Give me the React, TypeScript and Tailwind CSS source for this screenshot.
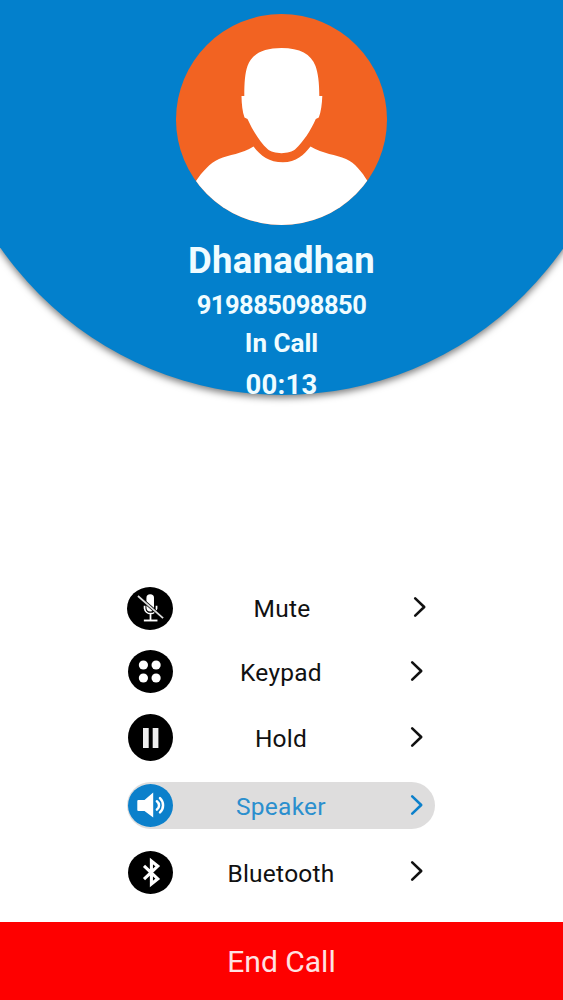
import React from 'react';
import clsx from 'clsx';

interface CallAction {
  label: string;
  icon: React.ReactNode;
  rowClass: string;
  labelClass: string;
  chevronClass: string;
  active?: boolean;
}

const Avatar: React.FC = () => (
  <svg className="h-[211px] w-[211px] shrink-0" viewBox="0 0 211 211">
    <defs>
      <clipPath id="avatar-clip">
        <circle cx="105.5" cy="105.5" r="105.5" />
      </clipPath>
    </defs>
    <g clipPath="url(#avatar-clip)">
      <rect width="211" height="211" fill="#f26322" />
      <path
        fill="#fff"
        d="M105.5 34C87 34 76 40 71.5 52C69 59 68.3 68 68.3 82H65.5C65.6 90 66.5 98 68.5 103.5L71.5 105C77 117 84 128 91.5 135C97 140.5 114 140.5 119.5 135C127 128 134.5 117 139.8 105L142.8 103.5C145 98 146 90 146.3 82H143.3C143.3 68 142 59 139.5 52C135 40 124 34 105.5 34Z"
      />
      <path
        fill="#fff"
        d="M77.5 132.5C84 141 93 148.3 107 148.3C120 148.3 128 141 134.5 132.5C147 140 160 140.5 170 145C179 149 186 158 191.5 167V211H20V167C26 158 34 149 43 145C53 140.5 66 140 77.5 132.5Z"
      />
    </g>
  </svg>
);

const MuteIcon: React.FC = () => (
  <svg className="h-[43px] w-[46px]" viewBox="0 0 45 43" preserveAspectRatio="none" fill="none">
    <ellipse cx="22.5" cy="21.5" rx="22.5" ry="21.5" fill="#000" />
    <rect x="19" y="7.3" width="7.4" height="17.2" rx="3.7" fill="#fff" />
    <path d="M17.2 18.8v2.7a5.9 6 0 0 0 11.7 0v-2.7M23 27.5V33" stroke="#fff" strokeWidth="1.7" />
    <path d="M16.5 33.5h13.3" stroke="#fff" strokeWidth="1.9" />
    <path d="M11 9.3l24.5 22" stroke="#000" strokeWidth="3.2" />
    <path d="M10.7 9l24.6 22.2" stroke="#ddd" strokeWidth="1.7" />
  </svg>
);

const KeypadIcon: React.FC = () => (
  <svg className="h-[43px] w-[45px]" viewBox="0 0 45 43">
    <ellipse cx="22.5" cy="21.5" rx="22.5" ry="21.5" fill="#000" />
    <g fill="#fff">
      <circle cx="15.4" cy="15" r="4.6" />
      <circle cx="28.1" cy="15" r="4.6" />
      <circle cx="15.4" cy="28" r="4.6" />
      <circle cx="28.1" cy="28" r="4.6" />
    </g>
  </svg>
);

const HoldIcon: React.FC = () => (
  <svg className="h-[47px] w-[45px]" viewBox="0 0 45 47">
    <ellipse cx="22.5" cy="23.5" rx="22.5" ry="23.5" fill="#000" />
    <path d="M15 14h5.7v20H15zM24.7 14h5.7v20h-5.7z" fill="#eee" />
  </svg>
);

const SpeakerIcon: React.FC = () => (
  <svg className="h-[43px] w-[45px]" viewBox="0 0 45 43" fill="none">
    <ellipse cx="22.5" cy="21.5" rx="22.5" ry="21.5" fill="#0c80cb" />
    <path d="M10.3 16h6.2l8.7-7.5v25L16.5 27h-6.2q-1 0-1-1v-9q0-1 1-1Z" fill="#fff" />
    <path
      d="M28.9 17.2a5.2 5.2 0 0 1 0 8.4M32 14.2a9.8 9.8 0 0 1 0 14.2"
      stroke="#fff"
      strokeWidth="2.5"
      strokeLinecap="round"
    />
  </svg>
);

const BluetoothIcon: React.FC = () => (
  <svg className="h-[43px] w-[45px]" viewBox="0 0 45 43" fill="none">
    <ellipse cx="22.5" cy="21.5" rx="22.5" ry="21.5" fill="#000" />
    <path
      d="M16 14.8L29.8 27.8L23.4 33V10L29.8 15.2L16 28.2"
      stroke="#fff"
      strokeWidth="3.1"
    />
  </svg>
);

const Chevron: React.FC<{ className: string }> = ({ className }) => (
  <svg className={clsx('h-[22px] w-[14px] shrink-0', className)} viewBox="0 0 14 22" fill="none">
    <path
      d="M2.2 2.4L11.2 11L2.2 19.6"
      stroke="currentColor"
      strokeWidth="2.6"
      strokeLinecap="round"
      strokeLinejoin="round"
    />
  </svg>
);

const actions: CallAction[] = [
  {
    label: 'Mute',
    icon: <MuteIcon />,
    rowClass: 'h-[47px] pl-0',
    labelClass: 'pl-[2px] pt-px',
    chevronClass: 'mr-[8px] mb-[3px]',
  },
  {
    label: 'Keypad',
    icon: <KeypadIcon />,
    rowClass: 'mt-4 h-[47px] pl-px',
    labelClass: 'pt-[2px]',
    chevronClass: 'mr-[11px] mb-[2px]',
  },
  {
    label: 'Hold',
    icon: <HoldIcon />,
    rowClass: 'mt-[19px] h-[47px] pl-px',
    labelClass: 'pt-[2px]',
    chevronClass: 'mr-[11px] mb-px',
  },
  {
    label: 'Speaker',
    icon: <SpeakerIcon />,
    rowClass: 'mt-[21px] h-[47px] pl-px',
    labelClass: 'pt-[2px]',
    chevronClass: 'mr-[11px] mb-[2px]',
    active: true,
  },
  {
    label: 'Bluetooth',
    icon: <BluetoothIcon />,
    rowClass: 'mt-5 h-[47px] pl-px',
    labelClass: 'pt-[2px]',
    chevronClass: 'mr-[11px] mb-[3px]',
  },
];

const ActionRow: React.FC<{ action: CallAction }> = ({ action }) => (
  <button
    className={clsx(
      'flex w-[308px] items-center rounded-full',
      action.rowClass,
      action.active ? 'bg-[#dedddd] text-[#2b8fce]' : 'text-[#111]'
    )}
  >
    <span className="shrink-0">{action.icon}</span>
    <span className={clsx('w-[216px] text-center text-[24.5px] leading-[30px] tracking-[0.25px]', action.labelClass)}>
      {action.label}
    </span>
    <Chevron className={clsx('ml-auto', action.chevronClass, action.active && 'text-[#0c80cb]')} />
  </button>
);

const App: React.FC = () => {
  return (
    <div className="flex h-[1000px] w-[563px] flex-col overflow-hidden bg-white font-['Roboto',sans-serif]">
      <header className="flex h-[420px] shrink-0 justify-center overflow-hidden">
        <div className="-mt-[291px] flex size-[686px] shrink-0 flex-col items-center rounded-full bg-[#0380cc] pt-[305px] font-bold text-[#f0fcff] shadow-[0_3px_7px_rgba(0,0,0,0.5)]">
          <Avatar />
          <h1 className="mt-4 text-[36.5px] leading-10 tracking-[0.25px]">Dhanadhan</h1>
          <p className="mt-[4px] text-[25.5px] leading-10 tracking-[-0.5px]">919885098850</p>
          <p className="-mt-px text-[26px] leading-[39px]">In Call</p>
          <p className="mt-[2px] text-[27.5px] leading-10 tracking-[0.2px]">00:13</p>
        </div>
      </header>

      <main className="flex flex-1 flex-col pl-[127px] pt-[165px]">
        {actions.map((action) => (
          <ActionRow key={action.label} action={action} />
        ))}
      </main>

      <button className="h-[78px] w-full shrink-0 bg-[#fe0000] text-[30px] text-[#ffe2e2]">End Call</button>
    </div>
  );
};

export default App;
